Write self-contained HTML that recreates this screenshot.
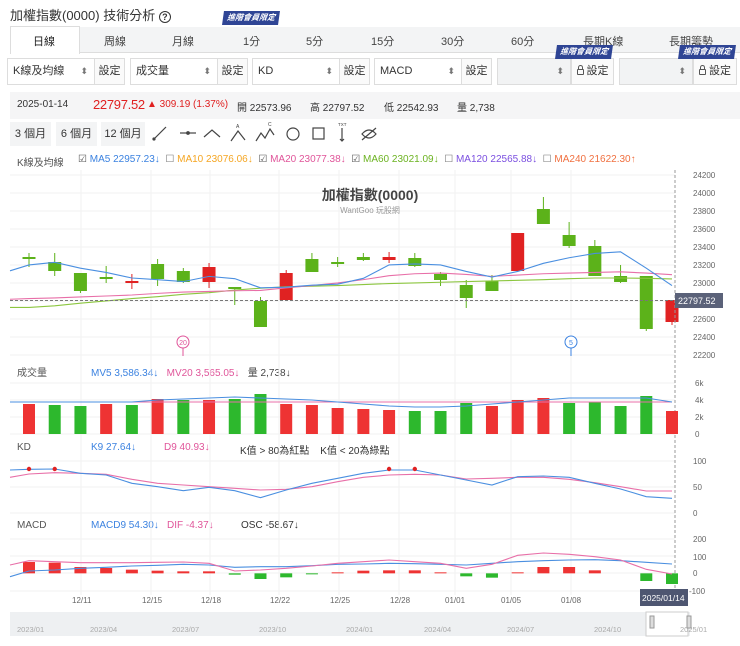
<!DOCTYPE html>
<html><head><meta charset="utf-8">
<style>
*{margin:0;padding:0;box-sizing:border-box}
body{width:740px;height:646px;background:#fff;font-family:"Liberation Sans","Noto Sans CJK TC",sans-serif;color:#333;position:relative;overflow:hidden;font-size:11px}
.a{position:absolute;white-space:nowrap}
.badge{position:absolute;background:#2f4595;color:#fff;font-size:8px;font-weight:bold;font-style:italic;padding:2px 4px;line-height:10px;transform:skewX(-8deg)}
.sel{position:absolute;height:27px;border:1px solid #ddd;background:#fff;font-size:11px;line-height:25px;padding-left:5px}
.sel:after{content:"⬍";position:absolute;right:6px;font-size:9px;color:#777}
.btn{position:absolute;height:27px;border:1px solid #ddd;background:#fafafa;font-size:11px;line-height:25px;text-align:center}
.dis{background:#f2f3f4}
.lk{display:inline-block;width:7px;height:6px;border:1px solid #555;border-radius:1px;position:relative;margin-right:3px;vertical-align:-1px}
.lk:before{content:"";position:absolute;left:0;top:-5px;width:3px;height:4px;border:1px solid #555;border-bottom:none;border-radius:3px 3px 0 0}
.rb{position:absolute;top:122px;height:24px;background:#f3f4f5;line-height:24px;text-align:center;font-size:11px}
.tab{position:absolute;top:33px;font-size:11px;color:#444}
</style></head><body>
<div class="a" style="left:10px;top:5px;font-size:13px;color:#333">加權指數(0000) 技術分析 <span style="display:inline-block;width:12px;height:12px;border:1.3px solid #333;border-radius:50%;font-size:9px;line-height:10px;text-align:center;font-weight:bold">?</span></div>
<div class="a" style="left:10px;top:27px;width:730px;height:26px;background:#f3f4f5;border-bottom:1px solid #ddd"></div>
<div class="a" style="left:10px;top:26px;width:70px;height:28px;background:#fff;border:1px solid #ddd;border-bottom:none"></div>
<div class="tab" style="left:33px;color:#222">日線</div>
<div class="tab" style="left:104px">周線</div>
<div class="tab" style="left:172px">月線</div>
<div class="tab" style="left:243px">1分</div>
<div class="tab" style="left:306px">5分</div>
<div class="tab" style="left:371px">15分</div>
<div class="tab" style="left:441px">30分</div>
<div class="tab" style="left:511px">60分</div>
<div class="tab" style="left:583px">長期K線</div>
<div class="tab" style="left:669px">長期籌勢</div>
<div class="badge" style="left:223px;top:11px">進階會員限定</div>

<div class="sel" style="left:7px;top:58px;width:88px">K線及均線</div><div class="btn" style="left:94px;top:58px;width:31px">設定</div>
<div class="sel" style="left:130px;top:58px;width:88px">成交量</div><div class="btn" style="left:217px;top:58px;width:31px">設定</div>
<div class="sel" style="left:252px;top:58px;width:88px">KD</div><div class="btn" style="left:339px;top:58px;width:31px">設定</div>
<div class="sel" style="left:374px;top:58px;width:88px">MACD</div><div class="btn" style="left:461px;top:58px;width:31px">設定</div>
<div class="sel dis" style="left:497px;top:58px;width:74px"></div><div class="btn" style="left:571px;top:58px;width:43px"><span class="lk"></span>設定</div>
<div class="sel dis" style="left:619px;top:58px;width:74px"></div><div class="btn" style="left:693px;top:58px;width:44px"><span class="lk"></span>設定</div>
<div class="badge" style="left:556px;top:45px">進階會員限定</div>
<div class="badge" style="left:679px;top:45px">進階會員限定</div>

<div class="a" style="left:10px;top:92px;width:730px;height:27px;background:#f5f5f6"></div>
<div class="a" style="left:17px;top:99px;font-size:10px">2025-01-14</div>
<div class="a" style="left:93px;top:97px;font-size:13px;color:#e02020;letter-spacing:-0.3px">22797.52</div>
<div class="a" style="left:147px;top:99px;font-size:10px;color:#e02020">▲ 309.19 (1.37%)</div>
<div class="a" style="left:237px;top:99px;font-size:10px">開 22573.96</div>
<div class="a" style="left:310px;top:99px;font-size:10px">高 22797.52</div>
<div class="a" style="left:384px;top:99px;font-size:10px">低 22542.93</div>
<div class="a" style="left:457px;top:99px;font-size:10px">量 2,738</div>

<div class="rb" style="left:10px;width:41px">3 個月</div>
<div class="rb" style="left:56px;width:41px">6 個月</div>
<div class="rb" style="left:101px;width:44px">12 個月</div>
<svg class="a" style="left:140px;top:118px" width="240" height="30" fill="none" stroke="#444" stroke-width="1.2">
<path d="M14 21L26 9"/><circle cx="14" cy="21" r="1" fill="#444"/>
<path d="M40 15H56"/><circle cx="48" cy="15" r="1.3" fill="#444"/>
<path d="M64 19L72 12L80 19"/>
<path d="M91 23L98 13L105 22"/><text x="96" y="10" font-size="5" fill="#444" stroke="none">A</text>
<path d="M116 23L121 15L125 20L130 11L134 17"/><text x="128" y="8" font-size="5" fill="#444" stroke="none">C</text>
<circle cx="153" cy="16" r="6"/>
<rect x="173" y="10" width="11" height="11"/>
<path d="M202 10V23M200 21L202 23L204 21"/><text x="198" y="8" font-size="4.5" fill="#444" stroke="none">TXT</text>
<path d="M222 16Q229 8 236 16Q229 24 222 16Z"/><path d="M222 22L236 10"/>
</svg>

<div class="a" style="left:17px;top:154px;font-size:10px;color:#555">K線及均線</div>
<div class="a" style="left:78px;top:154px;font-size:10px">
<span style="color:#555">☑</span> <span style="color:#3b82e0">MA5 22957.23↓</span>
&nbsp;<span style="color:#777">☐</span> <span style="color:#f5a623">MA10 23076.06↓</span>
&nbsp;<span style="color:#555">☑</span> <span style="color:#e0559a">MA20 23077.38↓</span>
&nbsp;<span style="color:#555">☑</span> <span style="color:#6cb321">MA60 23021.09↓</span>
&nbsp;<span style="color:#777">☐</span> <span style="color:#7b4fe0">MA120 22565.88↓</span>
&nbsp;<span style="color:#777">☐</span> <span style="color:#f07040">MA240 21622.30↑</span></div>

<div class="a" style="left:17px;top:364px;font-size:10px;color:#555">成交量</div>
<div class="a" style="left:91px;top:364px;font-size:10px"><span style="color:#3b82e0">MV5 3,586.34↓</span> &nbsp;&nbsp;<span style="color:#e0559a">MV20 3,565.05↓</span> &nbsp;&nbsp;<span style="color:#444">量 2,738↓</span></div>
<div class="a" style="left:17px;top:442px;font-size:10px;color:#555">KD</div>
<div class="a" style="left:91px;top:442px;font-size:10px"><span style="color:#3b82e0">K9 27.64↓</span></div>
<div class="a" style="left:164px;top:442px;font-size:10px;color:#e0559a">D9 40.93↓</div>
<div class="a" style="left:240px;top:442px;font-size:10px;color:#333">K值 &gt; 80為紅點 &nbsp;&nbsp;&nbsp;K值 &lt; 20為綠點</div>
<div class="a" style="left:17px;top:520px;font-size:10px;color:#555">MACD</div>
<div class="a" style="left:91px;top:520px;font-size:10px;color:#3b82e0">MACD9 54.30↓</div>
<div class="a" style="left:167px;top:520px;font-size:10px;color:#e0559a">DIF -4.37↓</div>
<div class="a" style="left:241px;top:520px;font-size:10px;color:#333">OSC -58.67↓</div>

<svg id="ch" class="a" style="left:0;top:0" width="740" height="646" font-family="Liberation Sans,Noto Sans CJK TC,sans-serif">
<text x="370" y="200" text-anchor="middle" font-size="14" font-weight="bold" fill="#444">加權指數(0000)</text>
<text x="370" y="213" text-anchor="middle" font-size="8" fill="#999">WantGoo 玩股網</text>
<g font-size="8" fill="#666">
<text x="693" y="178">24200</text><text x="693" y="196">24000</text><text x="693" y="214">23800</text><text x="693" y="232">23600</text><text x="693" y="250">23400</text><text x="693" y="268">23200</text><text x="693" y="286">23000</text><text x="693" y="322">22600</text><text x="693" y="340">22400</text><text x="693" y="358">22200</text>
<text x="695" y="386">6k</text><text x="695" y="403">4k</text><text x="695" y="420">2k</text><text x="695" y="437">0</text>
<text x="693" y="464">100</text><text x="693" y="490">50</text><text x="693" y="516">0</text>
<text x="693" y="542">200</text><text x="693" y="560">100</text><text x="693" y="576">0</text><text x="689" y="594">-100</text>
<text x="72" y="603">12/11</text><text x="142" y="603">12/15</text><text x="201" y="603">12/18</text><text x="270" y="603">12/22</text><text x="330" y="603">12/25</text><text x="390" y="603">12/28</text><text x="445" y="603">01/01</text><text x="501" y="603">01/05</text><text x="561" y="603">01/08</text>
</g>
<rect x="10" y="612" width="680" height="24" fill="#eef0f2"/>
<rect x="646" y="612" width="42" height="24" fill="#fff" stroke="#ccc"/>
<g font-size="7.5" fill="#aaa"><text x="17" y="632">2023/01</text><text x="90" y="632">2023/04</text><text x="172" y="632">2023/07</text><text x="259" y="632">2023/10</text><text x="346" y="632">2024/01</text><text x="424" y="632">2024/04</text><text x="507" y="632">2024/07</text><text x="594" y="632">2024/10</text><text x="680" y="632">2025/01</text></g>
<rect x="650" y="616" width="4" height="12" fill="#ddd" stroke="#999"/><rect x="687" y="616" width="4" height="12" fill="#ddd" stroke="#999"/>
</svg>
<script>
var s=document.getElementById('ch'),h='';
function X(i){return 29+i*25.72}
var G='#5cb21a',R='#e02222';
for(var k=0;k<=10;k++){h+='<line x1="10" x2="675" y1="'+(175+k*18)+'" y2="'+(175+k*18)+'" stroke="#f0f0f0"/>'}
[81,151,210,279,339,399,455,511,571].forEach(function(x){h+='<line x1="'+x+'" x2="'+x+'" y1="170" y2="595" stroke="#f2f2f2"/>'});
[383,400,417,434,461,487,513,539,556,573,591].forEach(function(y){h+='<line x1="10" x2="675" y1="'+y+'" y2="'+y+'" stroke="#f2f2f2"/>'});
var C=[['g',257,259,253,267],['g',262,271,253,276],['g',273,291,273,293],['g',277,279,266,283],['r',281,283,274,289],['g',264,279,259,286],['g',271,282,268,283],['r',267,282,263,288],['g',287,289,287,305],['g',301,327,297,327],['r',273,300,270,300],['g',259,272,253,272],['g',262,263,257,267],['g',257,260,253,261],['r',257,260,252,263],['g',258,266,253,267],['g',274,280,272,286],['g',285,298,280,308],['g',281,291,275,291],['r',233,271,233,271],['g',209,224,197,224],['g',235,246,222,248],['g',246,276,240,276],['g',276,282,265,283],['g',276,329,276,331],['r',300,322,300,325]];
C.forEach(function(c,i){var x=X(i),col=c[0]=='g'?G:R;h+='<line x1="'+x+'" x2="'+x+'" y1="'+c[3]+'" y2="'+c[4]+'" stroke="'+col+'"/><rect x="'+(x-6.5)+'" y="'+c[1]+'" width="13" height="'+Math.max(2,c[2]-c[1])+'" fill="'+col+'"/>'});
function L(arr,col,x0){var p=[];if(x0!=null)p.push('10,'+x0);arr.forEach(function(v,i){if(v!=null)p.push(X(i)+','+v)});return '<polyline fill="none" stroke="'+col+'" stroke-width="1.1" points="'+p.join(' ')+'"/>'}
function Z(a){return a.map(function(v){return 175+(v-40)*0.327})}
h+=L(Z([445,440,432,425,418,412,405,400,392,386,382,380,378,375,372,370,368,366,364,362,360,357,355,355,356,358]),'#8cc63f',Z([445])[0]);
h+=L(Z([418,416,413,410,407,402,398,396,394,393,385,378,370,360,348,342,340,344,350,346,342,340,338,336,340,345]),'#e86fa8',Z([420])[0]);
h+=L(Z([315,307,325,338,355,360,366,350,357,385,383,377,374,356,315,312,315,335,352,335,310,293,280,275,325,378]),'#4a8fe0',Z([333])[0]);
h+='<line x1="10" x2="675" y1="300.5" y2="300.5" stroke="#777" stroke-dasharray="3,2"/><line x1="675" x2="675" y1="170" y2="600" stroke="#999" stroke-dasharray="3,2"/>';
h+='<rect x="675" y="293" width="48" height="15" fill="#5b6279"/><text x="678" y="304" font-size="9" fill="#fff">22797.52</text>';
h+='<line x1="183" x2="183" y1="348" y2="356" stroke="#e0559a"/><circle cx="183" cy="342" r="6" fill="#fff" stroke="#e0559a"/><text x="183" y="345" font-size="7" fill="#e0559a" text-anchor="middle">20</text>';
h+='<line x1="571" x2="571" y1="348" y2="356" stroke="#3b82e0"/><circle cx="571" cy="342" r="6" fill="#fff" stroke="#3b82e0"/><text x="571" y="345" font-size="7" fill="#3b82e0" text-anchor="middle">5</text>';
var VT=[404,405,406,404,405,399,400,400,399,394,404,405,408,409,410,411,411,403,406,400,398,403,402,406,396,411],VC='rggrgrgrggrrrrrgggrrrggggr';
VT.forEach(function(t,i){h+='<rect x="'+(X(i)-6)+'" y="'+t+'" width="12" height="'+(434-t)+'" fill="'+(VC[i]=='g'?'#2db82d':'#ee3333')+'"/>'});
h+=L([402,402,402,402,402,402,402,402,402,402,402,402,402,402,402,402,402,402,402,402,402,402,402,402,402,402],'#e86fa8',402);
h+=L([402,402,402,402,402,400,399,398,397,398,399,400,402,404,406,407,407,406,404,402,400,398,398,398,398,402],'#4a8fe0',402);
function K(a){return a.map(function(v){return 370+v/3})}
h+=L(K([312,308,310,313,328,340,345,350,355,360,358,350,335,322,315,313,315,327,325,322,322,328,338,350,363,363]),'#e86fa8',K([322])[0]);
h+=L(K([298,297,310,315,340,350,362,352,362,383,360,340,325,310,300,300,315,330,345,320,318,322,340,357,380,385]),'#4a8fe0',K([300])[0]);
[0,1,14,15].forEach(function(i){h+='<circle cx="'+X(i)+'" cy="469" r="2.2" fill="#e02222"/>'});
var M=[[576,'r'],[578,'r'],[591,'r'],[594,'r'],[599,'r'],[602,'r'],[604,'r'],[604,'r'],[614,'g'],[627,'g'],[622,'g'],[613,'g'],[607,'r'],[602,'r'],[601,'r'],[601,'r'],[607,'r'],[619,'g'],[623,'g'],[607,'r'],[591,'r'],[591,'r'],[601,'r'],null,[633,'g'],[642,'g']];
M.forEach(function(m,i){if(!m)return;var y0=370+610/3,y1=370+m[0]/3,t=Math.min(y0,y1),hh=Math.max(1,Math.abs(y1-y0));h+='<rect x="'+(X(i)-6)+'" y="'+t+'" width="12" height="'+hh+'" fill="'+(m[1]=='g'?'#2db82d':'#ee3333')+'"/>'});
h+=L(K([603,600,595,592,588,586,583,585,592,590,590,587,583,582,580,581,583,585,580,575,572,570,569,572,577,582]),'#4a8fe0',K([620])[0]);
h+=L(K([572,575,578,578,578,577,576,580,603,600,595,588,580,575,570,575,580,595,583,556,549,553,560,570,598,612]),'#e86fa8',K([585])[0]);
h+='<rect x="640" y="589" width="48" height="17" fill="#4e5671"/><text x="642" y="601" font-size="8.5" fill="#fff">2025/01/14</text>';
s.insertAdjacentHTML('afterbegin',h);
</script>
</body></html>
